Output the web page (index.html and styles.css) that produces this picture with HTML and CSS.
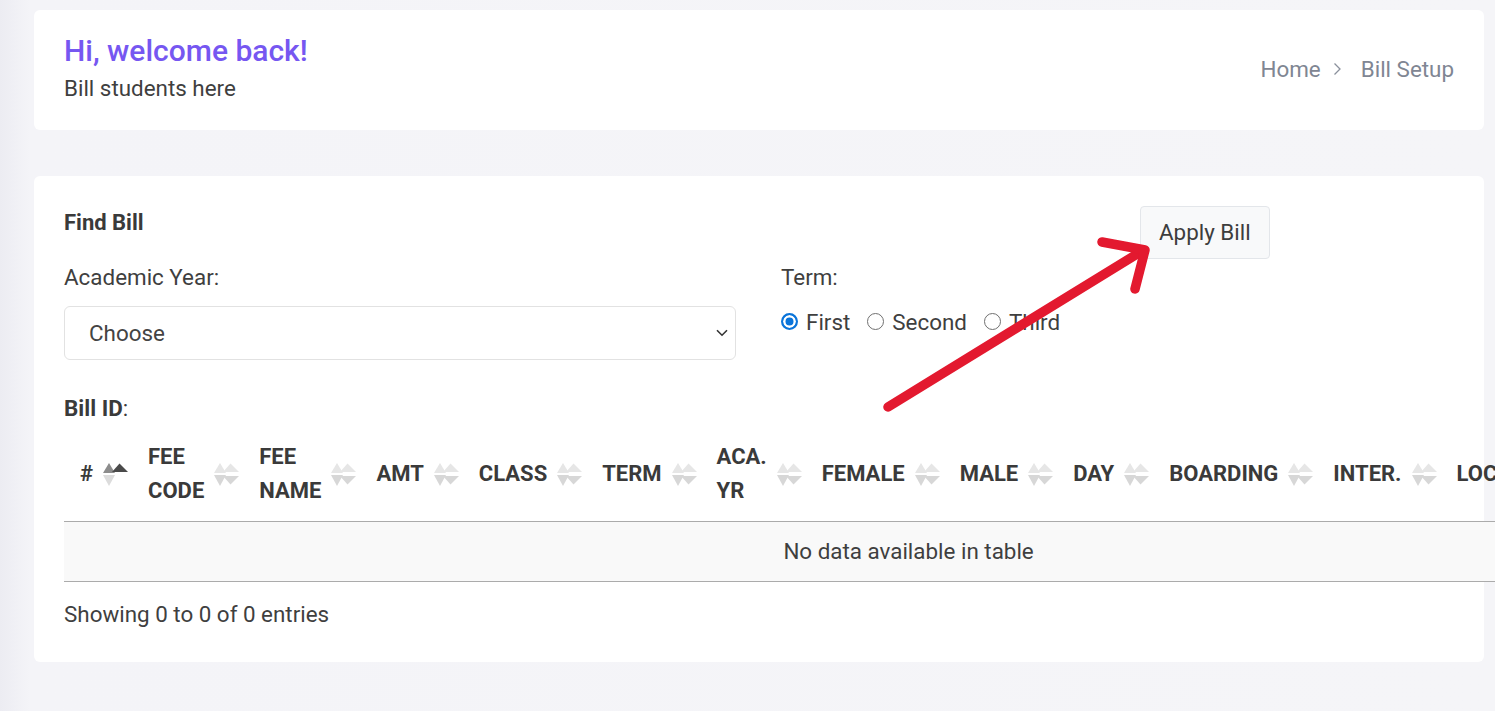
FILE: index.html
```html
<!DOCTYPE html>
<html lang="en">
<head>
<meta charset="utf-8">
<title>Bill Setup</title>
<link rel="stylesheet" href="styles.css">
</head>
<body>
<div class="page">
  <div class="card welcome">
    <div class="welcome-text">
      <h4 class="hello">Hi, welcome back!</h4>
      <p class="sub">Bill students here</p>
    </div>
    <ol class="crumbs">
      <li>Home</li>
      <li class="sep"><svg width="9" height="14" viewBox="0 0 9 14"><path d="M1.5 1.5 L7 7 L1.5 12.5" fill="none" stroke="#8a909c" stroke-width="1.3"/></svg></li>
      <li>Bill Setup</li>
    </ol>
  </div>

  <div class="card main">
    <div class="form-grid">
      <h5 class="title">Find Bill</h5>
      <div class="btn-cell"><button class="btn">Apply Bill</button></div>
      <div class="lbl">Academic Year:</div>
      <div class="lbl">Term:</div>
      <div class="select"><span>Choose</span><svg width="12" height="8" viewBox="0 0 12 8"><path d="M1 1.2 L6 6.2 L11 1.2" fill="none" stroke="#333" stroke-width="1.6"/></svg></div>
      <div class="radios">
        <span class="opt"><span class="dot on"></span>First</span>
        <span class="opt"><span class="dot"></span>Second</span>
        <span class="opt"><span class="dot"></span>Third</span>
      </div>
    </div>

    <div class="billid"><b>Bill ID</b>:</div>

    <table class="tbl">
      <thead>
        <tr>
          <th><div class="th"><span>#</span><svg class="sort" viewBox="0 0 25 25" width="25" height="25"><path d="M0 11 L6 1 L12 11Z" fill="#8c8c8c"/><path d="M9 10 L16.5 1.5 L25 10Z" fill="#4a4a4a"/><path d="M0 13 L6 24 L12 13Z" fill="#dcdcdc"/></svg></div></th>
          <th><div class="th"><span>FEE<br>CODE</span><svg class="sort" viewBox="0 0 25 25" width="25" height="25"><path d="M0 11 L6 1 L12 11Z" fill="#e6e6e6"/><path d="M9 10 L16.5 1.5 L25 10Z" fill="#e6e6e6"/><path d="M0 13 L6 24 L12 13Z" fill="#d7d7d7"/><path d="M9 14 L16.5 22.5 L25 14Z" fill="#d7d7d7"/></svg></div></th>
          <th><div class="th"><span>FEE<br>NAME</span><svg class="sort" viewBox="0 0 25 25" width="25" height="25"><path d="M0 11 L6 1 L12 11Z" fill="#e6e6e6"/><path d="M9 10 L16.5 1.5 L25 10Z" fill="#e6e6e6"/><path d="M0 13 L6 24 L12 13Z" fill="#d7d7d7"/><path d="M9 14 L16.5 22.5 L25 14Z" fill="#d7d7d7"/></svg></div></th>
          <th><div class="th"><span>AMT</span><svg class="sort" viewBox="0 0 25 25" width="25" height="25"><path d="M0 11 L6 1 L12 11Z" fill="#e6e6e6"/><path d="M9 10 L16.5 1.5 L25 10Z" fill="#e6e6e6"/><path d="M0 13 L6 24 L12 13Z" fill="#d7d7d7"/><path d="M9 14 L16.5 22.5 L25 14Z" fill="#d7d7d7"/></svg></div></th>
          <th><div class="th"><span>CLASS</span><svg class="sort" viewBox="0 0 25 25" width="25" height="25"><path d="M0 11 L6 1 L12 11Z" fill="#e6e6e6"/><path d="M9 10 L16.5 1.5 L25 10Z" fill="#e6e6e6"/><path d="M0 13 L6 24 L12 13Z" fill="#d7d7d7"/><path d="M9 14 L16.5 22.5 L25 14Z" fill="#d7d7d7"/></svg></div></th>
          <th><div class="th"><span>TERM</span><svg class="sort" viewBox="0 0 25 25" width="25" height="25"><path d="M0 11 L6 1 L12 11Z" fill="#e6e6e6"/><path d="M9 10 L16.5 1.5 L25 10Z" fill="#e6e6e6"/><path d="M0 13 L6 24 L12 13Z" fill="#d7d7d7"/><path d="M9 14 L16.5 22.5 L25 14Z" fill="#d7d7d7"/></svg></div></th>
          <th><div class="th"><span>ACA.<br>YR</span><svg class="sort" viewBox="0 0 25 25" width="25" height="25"><path d="M0 11 L6 1 L12 11Z" fill="#e6e6e6"/><path d="M9 10 L16.5 1.5 L25 10Z" fill="#e6e6e6"/><path d="M0 13 L6 24 L12 13Z" fill="#d7d7d7"/><path d="M9 14 L16.5 22.5 L25 14Z" fill="#d7d7d7"/></svg></div></th>
          <th><div class="th"><span>FEMALE</span><svg class="sort" viewBox="0 0 25 25" width="25" height="25"><path d="M0 11 L6 1 L12 11Z" fill="#e6e6e6"/><path d="M9 10 L16.5 1.5 L25 10Z" fill="#e6e6e6"/><path d="M0 13 L6 24 L12 13Z" fill="#d7d7d7"/><path d="M9 14 L16.5 22.5 L25 14Z" fill="#d7d7d7"/></svg></div></th>
          <th><div class="th"><span>MALE</span><svg class="sort" viewBox="0 0 25 25" width="25" height="25"><path d="M0 11 L6 1 L12 11Z" fill="#e6e6e6"/><path d="M9 10 L16.5 1.5 L25 10Z" fill="#e6e6e6"/><path d="M0 13 L6 24 L12 13Z" fill="#d7d7d7"/><path d="M9 14 L16.5 22.5 L25 14Z" fill="#d7d7d7"/></svg></div></th>
          <th><div class="th"><span>DAY</span><svg class="sort" viewBox="0 0 25 25" width="25" height="25"><path d="M0 11 L6 1 L12 11Z" fill="#e6e6e6"/><path d="M9 10 L16.5 1.5 L25 10Z" fill="#e6e6e6"/><path d="M0 13 L6 24 L12 13Z" fill="#d7d7d7"/><path d="M9 14 L16.5 22.5 L25 14Z" fill="#d7d7d7"/></svg></div></th>
          <th><div class="th"><span>BOARDING</span><svg class="sort" viewBox="0 0 25 25" width="25" height="25"><path d="M0 11 L6 1 L12 11Z" fill="#e6e6e6"/><path d="M9 10 L16.5 1.5 L25 10Z" fill="#e6e6e6"/><path d="M0 13 L6 24 L12 13Z" fill="#d7d7d7"/><path d="M9 14 L16.5 22.5 L25 14Z" fill="#d7d7d7"/></svg></div></th>
          <th><div class="th"><span>INTER.</span><svg class="sort" viewBox="0 0 25 25" width="25" height="25"><path d="M0 11 L6 1 L12 11Z" fill="#e6e6e6"/><path d="M9 10 L16.5 1.5 L25 10Z" fill="#e6e6e6"/><path d="M0 13 L6 24 L12 13Z" fill="#d7d7d7"/><path d="M9 14 L16.5 22.5 L25 14Z" fill="#d7d7d7"/></svg></div></th>
          <th><div class="th"><span>LOC.</span><svg class="sort" viewBox="0 0 25 25" width="25" height="25"><path d="M0 11 L6 1 L12 11Z" fill="#e6e6e6"/><path d="M9 10 L16.5 1.5 L25 10Z" fill="#e6e6e6"/><path d="M0 13 L6 24 L12 13Z" fill="#d7d7d7"/><path d="M9 14 L16.5 22.5 L25 14Z" fill="#d7d7d7"/></svg></div></th>
          <th class="last"><div class="th"><span>ACTION</span><svg class="sort" viewBox="0 0 25 25" width="25" height="25"><path d="M0 11 L6 1 L12 11Z" fill="#e6e6e6"/><path d="M9 10 L16.5 1.5 L25 10Z" fill="#e6e6e6"/><path d="M0 13 L6 24 L12 13Z" fill="#d7d7d7"/><path d="M9 14 L16.5 22.5 L25 14Z" fill="#d7d7d7"/></svg></div></th>
        </tr>
      </thead>
      <tbody>
        <tr><td class="empty" colspan="14">No data available in table</td></tr>
      </tbody>
    </table>

    <div class="info">Showing 0 to 0 of 0 entries</div>
  </div>

  <svg class="arrow" width="1495" height="711" viewBox="0 0 1495 711">
    <path d="M888 407 L1142 251" fill="none" stroke="#e3192f" stroke-width="9.5" stroke-linecap="round"/>
    <path d="M1102 242 L1145 250 L1135 289" fill="none" stroke="#e3192f" stroke-width="9.5" stroke-linecap="round" stroke-linejoin="round"/>
  </svg>
</div>
</body>
</html>
```

FILE: styles.css
```css
html, body {
  margin: 0;
  padding: 0;
  height: 711px;
  overflow: hidden;
}
body {
  font-family: Roboto, "Liberation Sans", Arial, sans-serif;
  font-size: 22.4px;
  color: #404040;
  background: linear-gradient(to right, #ececf2 0, #f4f4f8 30px, #f5f5f8 100%);
}
.page {
  position: relative;
  padding: 10px 11px 0 34px;
}
.card {
  background: #fff;
  border-radius: 6px;
}
.welcome {
  display: flex;
  align-items: center;
  justify-content: space-between;
  padding: 23px 30px 25px;
  margin-bottom: 46px;
}
.hello {
  margin: 0 0 3px;
  font-size: 30px;
  font-weight: 500;
  line-height: 36px;
  color: #7657f1;
}
.sub {
  margin: 0;
  line-height: 33px;
  color: #3f3f3f;
}
.crumbs {
  display: flex;
  align-items: center;
  list-style: none;
  margin: 0;
  padding: 0;
  color: #7f8693;
  line-height: 33px;
}
.crumbs .sep {
  display: flex;
  align-items: center;
  margin: 0 19px 0 12px;
}
.main {
  padding: 30px 30px 31px;
}
.form-grid {
  display: grid;
  grid-template-columns: 672px 1fr;
  column-gap: 45px;
}
.title {
  margin: 0;
  font-size: 22px;
  font-weight: 700;
  line-height: 33px;
  color: #3a3a3a;
}
.btn-cell {
  padding-left: 359px;
}
.btn {
  font-family: Roboto, "Liberation Sans", Arial, sans-serif;
  font-size: 22.4px;
  line-height: 33px;
  color: #3d3d3d;
  background: #f8f9fa;
  border: 1px solid #e3e6ea;
  border-radius: 4px;
  padding: 9px 18px;
}
.lbl {
  margin: 2px 0 12px;
  line-height: 33px;
  color: #3f3f3f;
}
.select {
  display: flex;
  align-items: center;
  justify-content: space-between;
  box-sizing: border-box;
  height: 54px;
  border: 1px solid #e2e2e2;
  border-radius: 6px;
  padding: 0 7px 0 24px;
  color: #444;
}
.radios {
  display: flex;
  align-items: center;
  height: 33px;
  line-height: 33px;
  color: #3f3f3f;
}
.opt {
  display: inline-flex;
  align-items: center;
  gap: 8px;
  margin-right: 17px;
}
.dot {
  flex: none;
  box-sizing: border-box;
  width: 17px;
  height: 17px;
  border-radius: 50%;
  border: 1.5px solid #707070;
  background: #fff;
  margin-top: -3px;
}
.dot.on {
  border: 2px solid #0a74da;
  background: #0a74da;
  box-shadow: inset 0 0 0 2.5px #fff;
}
.billid {
  margin: 32px 0 3px;
  line-height: 33px;
  color: #3a3a3a;
}
.tbl {
  border-collapse: collapse;
  white-space: nowrap;
}
.tbl th {
  padding: 12px 4px 13px 16px;
  text-align: left;
  vertical-align: middle;
  font-size: 22px;
  font-weight: 700;
  line-height: 34px;
  color: #3a3a3a;
  border-bottom: 1px solid #ababab;
}
.tbl th.last {
  padding-right: 80px;
}
.th {
  display: flex;
  align-items: center;
  gap: 10px;
}
.sort {
  flex: none;
}
.tbl td.empty {
  text-align: center;
  background: #f9f9f9;
  padding: 13px 12px 14px;
  line-height: 32px;
  color: #3f3f3f;
  border-bottom: 1px solid #ababab;
}
.info {
  margin-top: 16px;
  line-height: 33px;
  color: #3f3f3f;
}
.arrow {
  position: absolute;
  left: 0;
  top: 0;
  pointer-events: none;
}
```
